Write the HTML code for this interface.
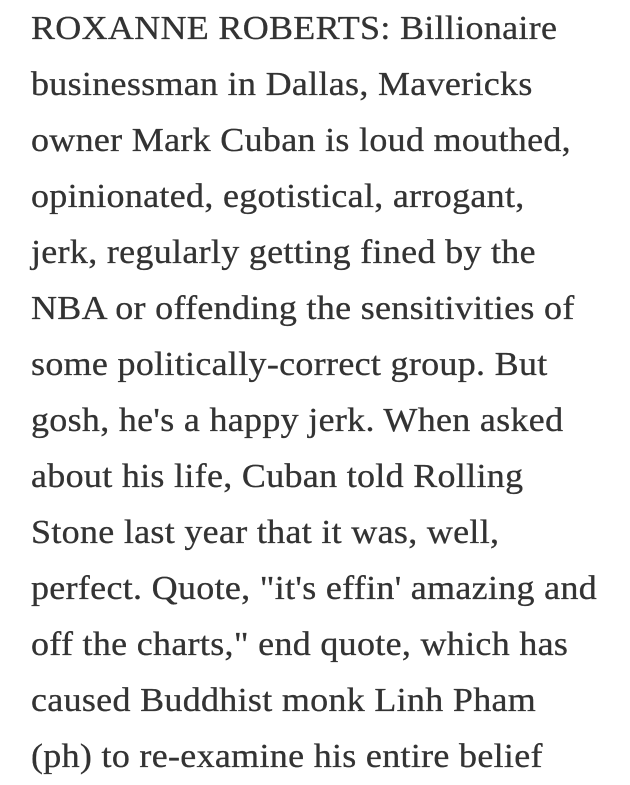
<!DOCTYPE html>
<html><head><meta charset="utf-8"><style>
html,body{margin:0;padding:0;background:#fff;width:630px;height:785px;overflow:hidden}
.t{position:absolute;left:31px;font-family:"Liberation Serif",serif;font-size:34px;color:#333;white-space:nowrap;line-height:1;letter-spacing:0.3px;transform:scaleX(1.058);transform-origin:0 0;-webkit-text-stroke:0.3px #333}
</style></head><body>
<div class="t" style="top:12px">ROXANNE ROBERTS: Billionaire</div>
<div class="t" style="top:68px">businessman in Dallas, Mavericks</div>
<div class="t" style="top:124px">owner Mark Cuban is loud mouthed,</div>
<div class="t" style="top:180px">opinionated, egotistical, arrogant,</div>
<div class="t" style="top:236px">jerk, regularly getting fined by the</div>
<div class="t" style="top:292px">NBA or offending the sensitivities of</div>
<div class="t" style="top:348px">some politically-correct group. But</div>
<div class="t" style="top:404px">gosh, he's a happy jerk. When asked</div>
<div class="t" style="top:460px">about his life, Cuban told Rolling</div>
<div class="t" style="top:516px">Stone last year that it was, well,</div>
<div class="t" style="top:572px">perfect. Quote, "it's effin' amazing and</div>
<div class="t" style="top:628px">off the charts," end quote, which has</div>
<div class="t" style="top:684px">caused Buddhist monk Linh Pham</div>
<div class="t" style="top:740px">(ph) to re-examine his entire belief</div>
</body></html>
